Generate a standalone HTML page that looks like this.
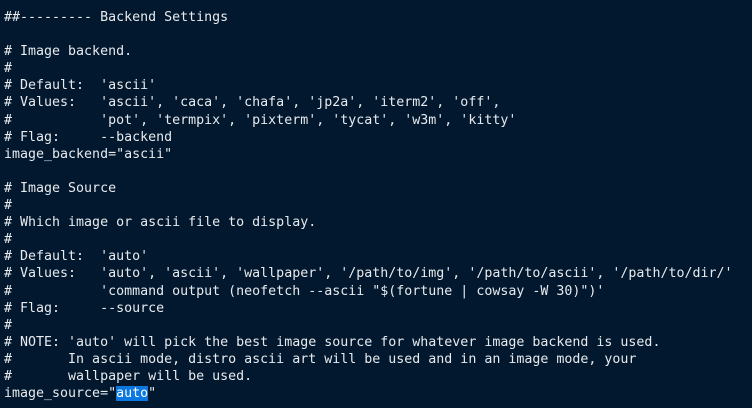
<!DOCTYPE html>
<html><head><style>
html,body{margin:0;padding:0;background:#01182e;width:752px;height:408px;overflow:hidden}
pre{margin:0;padding:9px 0 0 4px;font-family:"DejaVu Sans Mono","Liberation Mono",monospace;font-size:13.3px;line-height:17.1px;color:#e8eaee}
.h{background:#0a78e0;color:#fff}
</style></head><body><pre>##--------- Backend Settings

# Image backend.
#
# Default:  'ascii'
# Values:   'ascii', 'caca', 'chafa', 'jp2a', 'iterm2', 'off',
#           'pot', 'termpix', 'pixterm', 'tycat', 'w3m', 'kitty'
# Flag:     --backend
image_backend="ascii"

# Image Source
#
# Which image or ascii file to display.
#
# Default:  'auto'
# Values:   'auto', 'ascii', 'wallpaper', '/path/to/img', '/path/to/ascii', '/path/to/dir/'
#           'command output (neofetch --ascii "$(fortune | cowsay -W 30)")'
# Flag:     --source
#
# NOTE: 'auto' will pick the best image source for whatever image backend is used.
#       In ascii mode, distro ascii art will be used and in an image mode, your
#       wallpaper will be used.
image_source="<span class="h">auto</span>"</pre></body></html>
